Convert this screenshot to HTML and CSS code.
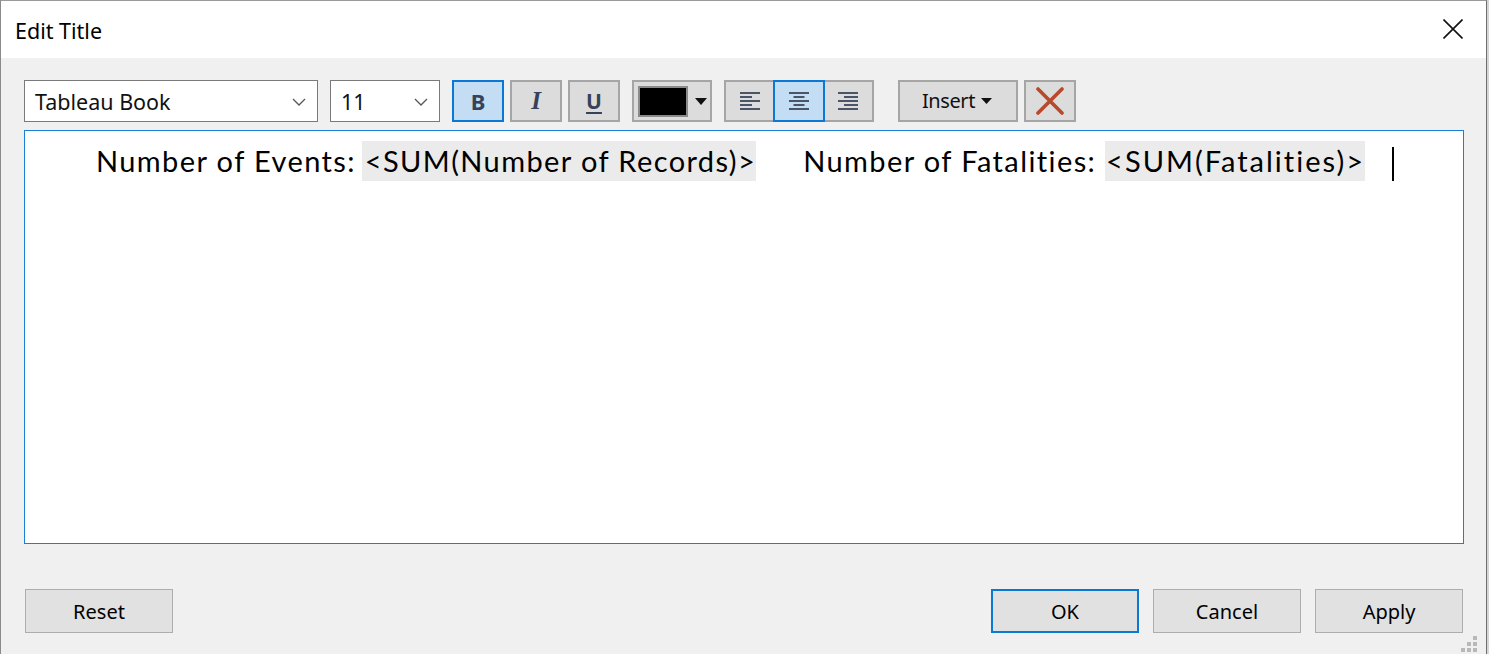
FILE: index.html
```html
<!DOCTYPE html>
<html>
<head>
<meta charset="utf-8">
<link rel="stylesheet" href="styles.css">
</head>
<body>
<div class="window">
  <div class="titlebar">
    <span class="title">Edit Title</span>
    <button class="close" aria-label="Close">
      <svg width="20" height="20" viewBox="0 0 20 20"><path d="M0.5 0.5 L19.5 19.5 M19.5 0.5 L0.5 19.5" stroke="#111" stroke-width="1.6" fill="none"/></svg>
    </button>
  </div>
  <div class="content">
    <div class="toolbar">
      <div class="select font-select">
        <span class="select-text">Tableau Book</span>
        <svg class="chev" width="14" height="8" viewBox="0 0 14 8"><path d="M1 1 L7 7 L13 1" stroke="#555" stroke-width="1.3" fill="none"/></svg>
      </div>
      <div class="select size-select">
        <span class="select-text">11</span>
        <svg class="chev" width="14" height="8" viewBox="0 0 14 8"><path d="M1 1 L7 7 L13 1" stroke="#555" stroke-width="1.3" fill="none"/></svg>
      </div>
      <div class="btn-row small">
        <button class="tbtn active"><span class="g-b">B</span></button>
        <button class="tbtn"><span class="g-i">I</span></button>
        <button class="tbtn"><span class="g-u">U</span></button>
      </div>
      <button class="tbtn color-btn">
        <span class="swatch"></span>
        <svg width="12" height="7" viewBox="0 0 12 7"><path d="M0 0 L12 0 L6 7 Z" fill="#111"/></svg>
      </button>
      <div class="align-group">
        <button class="abtn">
          <svg width="20" height="20" viewBox="0 0 20 20" fill="#4a5568"><rect x="0" y="0" width="20" height="2"/><rect x="0" y="4" width="12" height="2"/><rect x="0" y="8" width="20" height="2"/><rect x="0" y="12" width="12" height="2"/><rect x="0" y="16" width="20" height="2"/></svg>
        </button>
        <button class="abtn active">
          <svg width="20" height="20" viewBox="0 0 20 20" fill="#4a5568"><rect x="0" y="0" width="20" height="2"/><rect x="4.5" y="4" width="11" height="2"/><rect x="0" y="8" width="20" height="2"/><rect x="4.5" y="12" width="11" height="2"/><rect x="0" y="16" width="20" height="2"/></svg>
        </button>
        <button class="abtn">
          <svg width="20" height="20" viewBox="0 0 20 20" fill="#4a5568"><rect x="0" y="0" width="20" height="2"/><rect x="6" y="4" width="14" height="2"/><rect x="0" y="8" width="20" height="2"/><rect x="6" y="12" width="14" height="2"/><rect x="0" y="16" width="20" height="2"/></svg>
        </button>
      </div>
      <button class="tbtn insert-btn">Insert
        <svg width="11" height="6" viewBox="0 0 11 6"><path d="M0 0 L11 0 L5.5 6 Z" fill="#111"/></svg>
      </button>
      <button class="tbtn del-btn">
        <svg width="28" height="28" viewBox="0 0 28 28"><path d="M2 2 L26 26 M26 2 L2 26" stroke="#b8492b" stroke-width="3.6" stroke-linecap="round" fill="none"/></svg>
      </button>
    </div>
    <div class="editor">
      <div class="line">
        <span class="seg">Number of Events: </span><span class="field">&lt;SUM(Number of Records)&gt;</span><span class="seg gap2">Number of Fatalities: </span><span class="field field2">&lt;SUM(Fatalities)&gt;</span><span class="caret"></span>
      </div>
    </div>
    <div class="footer">
      <button class="dbtn">Reset</button>
      <div class="footer-right">
        <button class="dbtn primary">OK</button>
        <button class="dbtn">Cancel</button>
        <button class="dbtn">Apply</button>
      </div>
    </div>
  </div>
  <div class="grip">
    <span></span><span></span><span></span><span></span><span></span><span></span><span></span><span></span><span></span>
  </div>
</div>
</body>
</html>
```
FILE: styles.css
```css
* { box-sizing: border-box; }
html, body { margin: 0; padding: 0; }
body {
  width: 1489px;
  height: 654px;
  background: #d6d6d6;
  overflow: hidden;
  font-family: "Noto Sans", "Open Sans", sans-serif;
}
.window {
  position: relative;
  width: 1487px;
  height: 654px;
  background: #f0f0f0;
  border-left: 1px solid #8a8a8a;
  border-right: 1px solid #6f6f6f;
  border-top: 1px solid #9a9a9a;
  display: flex;
  flex-direction: column;
}
.titlebar {
  height: 57px;
  background: #fff;
  display: flex;
  align-items: center;
  justify-content: space-between;
  padding-left: 14px;
  padding-right: 23px;
}
.title {
  font-size: 21.5px;
  color: #000;
  margin-top: 2px;
}
.close {
  border: 0;
  background: transparent;
  padding: 0;
  width: 20px;
  height: 20px;
  margin-top: -1px;
}
.content {
  padding: 22px 23px 0 23px;
  display: flex;
  flex-direction: column;
}
.toolbar {
  display: flex;
  height: 42px;
  align-items: stretch;
}
.select {
  background: #fff;
  border: 1px solid #7a7a7a;
  display: flex;
  align-items: center;
  justify-content: space-between;
  padding: 0 11px 0 10px;
}
.select-text { font-size: 21.5px; color: #111; margin-top: 1px; }
.font-select { width: 294px; margin-right: 12px; }
.size-select { width: 110px; margin-right: 12px; }
.chev { margin-top: 1px; }
.btn-row { display: flex; gap: 6px; margin-right: 12px; }
.tbtn {
  height: 42px;
  width: 52px;
  background: #dcdcdc;
  border: 2px solid #a5a5a5;
  padding: 0;
  display: flex;
  align-items: center;
  justify-content: center;
  color: #3b4558;
}
.tbtn.active, .abtn.active {
  background: #c3ddf4;
  border-color: #0a78d4;
}
.g-b { font-family: "Noto Sans", sans-serif; font-weight: 700; font-size: 22px; color: #36425a; }
.g-i { font-family: "Liberation Serif", serif; font-style: italic; font-weight: 700; font-size: 25px; color: #36425a; }
.g-u { font-family: "Noto Sans", sans-serif; font-weight: 700; font-size: 21px; color: #36425a; text-decoration: underline; text-decoration-thickness: 2px; text-underline-offset: 3px; }
.color-btn { width: 80px; margin-right: 12px; justify-content: flex-start; padding-left: 4px; gap: 7px; }
.swatch {
  width: 50px;
  height: 31px;
  background: #000;
  border: 2px solid #8a8a8a;
}
.align-group {
  display: flex;
  width: 150px;
  height: 42px;
  margin-right: 24px;
  border: 2px solid #a5a5a5;
  background: #dcdcdc;
}
.abtn {
  flex: 1;
  border: 0;
  background: transparent;
  padding: 0;
  display: flex;
  align-items: center;
  justify-content: center;
  padding-top: 2px;
}
.abtn.active { border: 2px solid #0a78d4; margin: -2px 0; }
.insert-btn {
  width: 120px;
  margin-right: 6px;
  font-family: "Noto Sans", sans-serif;
  font-size: 20px;
  letter-spacing: -0.4px;
  color: #111;
  gap: 6px;
  padding-bottom: 2px;
  padding-right: 2px;
}
.insert-btn svg { margin-top: 2px; }
.del-btn { width: 52px; }
.editor {
  margin-top: 8px;
  width: 1440px;
  height: 414px;
  background: #fff;
  border: 1px solid #1a7fd6;
}
.line {
  display: flex;
  align-items: center;
  padding-left: 71px;
  margin-top: 10px;
  font-family: "Lato", sans-serif;
  font-size: 29px;
  letter-spacing: 1.4px;
  color: #000;
  white-space: pre;
  height: 40px;
}
.field {
  background: #ebebeb;
  height: 40px;
  line-height: 40px;
  margin-left: -3px;
  padding-left: 3px;
}
.field2 { letter-spacing: 2px; margin-left: 0; padding-left: 1px; }
.seg { line-height: 40px; }
.gap2 { margin-left: 47px; }
.caret {
  width: 2px;
  height: 34px;
  background: #000;
  margin-left: 27px;
  margin-top: 6px;
}
.footer {
  margin-top: 45px;
  margin-left: 1px;
  display: flex;
  justify-content: space-between;
  width: 1438px;
}
.footer-right { display: flex; gap: 14px; }
.dbtn {
  width: 148px;
  height: 44px;
  background: #e1e1e1;
  border: 1px solid #adadad;
  font-family: "Noto Sans", sans-serif;
  font-size: 20px;
  color: #000;
  padding: 0;
}
.dbtn.primary { border: 2px solid #0a78d4; }
.grip {
  position: absolute;
  right: 9px;
  bottom: 2px;
  width: 16px;
  height: 16px;
  display: grid;
  grid-template-columns: repeat(3, 4px);
  grid-template-rows: repeat(3, 4px);
  gap: 2px;
}
.grip span { background: #b8b8b8; }
.grip span:nth-child(1), .grip span:nth-child(2), .grip span:nth-child(4) { background: transparent; }
```
